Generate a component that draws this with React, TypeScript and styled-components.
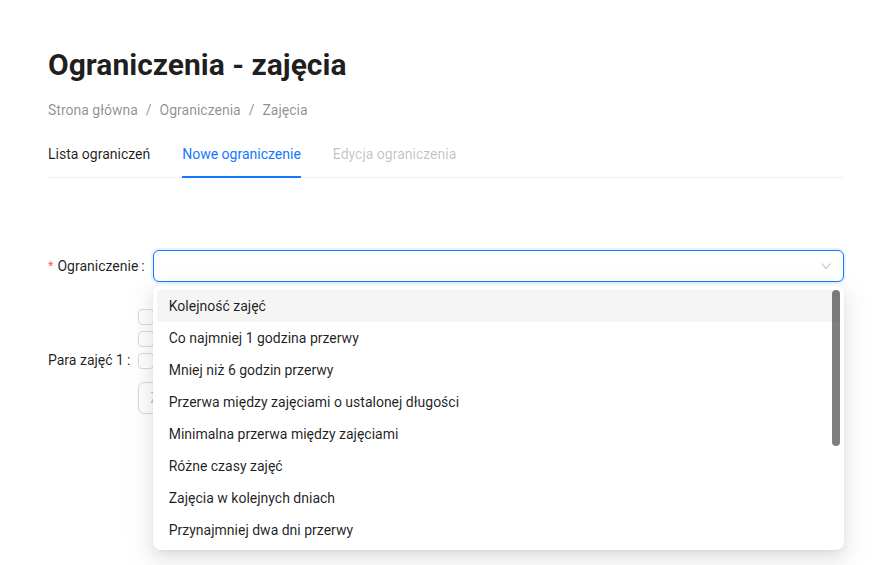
import React from "react";
import styled, { createGlobalStyle } from "styled-components";

const GlobalStyle = createGlobalStyle`
  html, body {
    margin: 0;
    padding: 0;
    background: #ffffff;
  }
  body {
    font-family: Roboto, "Noto Sans", "Liberation Sans", sans-serif;
    font-size: 14px;
    color: rgba(0, 0, 0, 0.88);
  }
  * { box-sizing: border-box; }
`;

const Page = styled.div`
  padding: 46px 48px 0 48px;
  width: 892px;
  height: 565px;
  overflow: hidden;
`;

const Title = styled.h1`
  margin: 0;
  font-size: 30px;
  line-height: 38px;
  font-weight: 700;
  color: rgba(0, 0, 0, 0.88);
`;

const Breadcrumb = styled.nav`
  margin-top: 15px;
  display: flex;
  align-items: center;
  font-size: 14px;
  line-height: 22px;
  color: rgba(0, 0, 0, 0.45);
`;

const Separator = styled.span`
  margin: 0 8px;
`;

const TabNav = styled.div`
  margin-top: 10px;
  display: flex;
  gap: 32px;
  border-bottom: 1px solid rgba(5, 5, 5, 0.06);
`;

const Tab = styled.div<{ $state: "normal" | "active" | "disabled" }>`
  position: relative;
  padding: 12px 0;
  font-size: 14px;
  line-height: 22px;
  color: ${(p) =>
    p.$state === "active"
      ? "#1677ff"
      : p.$state === "disabled"
      ? "rgba(0, 0, 0, 0.25)"
      : "rgba(0, 0, 0, 0.88)"};
  &::after {
    content: "";
    display: ${(p) => (p.$state === "active" ? "block" : "none")};
    position: absolute;
    left: 0;
    right: 0;
    bottom: -1px;
    height: 2px;
    background: #1677ff;
  }
`;

const Form = styled.div`
  margin-top: 72px;
  display: flex;
  flex-direction: column;
  gap: 24px;
`;

const FormRow = styled.div<{ $center?: boolean; $raised?: boolean }>`
  display: flex;
  align-items: ${(p) => (p.$center ? "center" : "flex-start")};
  position: ${(p) => (p.$raised ? "relative" : "static")};
  z-index: ${(p) => (p.$raised ? 5 : "auto")};
`;

const Label = styled.label`
  flex: none;
  display: inline-flex;
  align-items: center;
  height: 32px;
  font-size: 14px;
  color: rgba(0, 0, 0, 0.88);
  white-space: nowrap;
`;

const Star = styled.span`
  color: #ff4d4f;
  font-family: "Liberation Sans", sans-serif;
  font-size: 14px;
  margin-right: 4px;
  line-height: 1;
`;

const Colon = styled.span`
  margin: 0 8px 0 3px;
`;

const Control = styled.div`
  flex: 1;
  position: relative;
`;

const SelectBox = styled.div`
  height: 32px;
  border: 1px solid #1677ff;
  border-radius: 6px;
  box-shadow: 0 0 0 2px rgba(5, 145, 255, 0.1);
  background: #fff;
  display: flex;
  align-items: center;
  justify-content: flex-end;
  padding-right: 11px;
`;

const Dropdown = styled.div`
  position: absolute;
  top: 36px;
  left: 0;
  right: 0;
  z-index: 10;
  background: #fff;
  border-radius: 8px;
  padding: 4px;
  box-shadow: 0 6px 16px 0 rgba(0, 0, 0, 0.08),
    0 3px 6px -4px rgba(0, 0, 0, 0.12), 0 9px 28px 8px rgba(0, 0, 0, 0.05);
`;

const Option = styled.div<{ $active?: boolean }>`
  height: 32px;
  padding: 5px 12px;
  line-height: 22px;
  font-size: 14px;
  border-radius: 4px;
  color: rgba(0, 0, 0, 0.88);
  background: ${(p) => (p.$active ? "rgba(0, 0, 0, 0.04)" : "transparent")};
`;

const ScrollThumb = styled.div`
  position: absolute;
  top: 4px;
  right: 4px;
  width: 8px;
  height: 156px;
  border-radius: 99px;
  background: rgba(0, 0, 0, 0.5);
`;

const CheckList = styled.div`
  display: flex;
  flex-direction: column;
`;

const CheckItem = styled.label`
  display: flex;
  align-items: center;
  height: 22px;
`;

const CheckBox = styled.span`
  width: 16px;
  height: 16px;
  border: 1px solid #d9d9d9;
  border-radius: 4px;
  background: #fff;
  flex: none;
`;

const TextInput = styled.div`
  margin-top: 10px;
  width: 240px;
  height: 32px;
  border: 1px solid #d9d9d9;
  border-radius: 6px;
  padding: 4px 11px;
  line-height: 22px;
  color: rgba(0, 0, 0, 0.25);
`;

const options = [
  "Kolejność zajęć",
  "Co najmniej 1 godzina przerwy",
  "Mniej niż 6 godzin przerwy",
  "Przerwa między zajęciami o ustalonej długości",
  "Minimalna przerwa między zajęciami",
  "Różne czasy zajęć",
  "Zajęcia w kolejnych dniach",
  "Przynajmniej dwa dni przerwy",
];

const Chevron = () => (
  <svg width="12" height="12" viewBox="0 0 12 12" fill="none">
    <polyline
      points="1.5,3.5 6,8.5 10.5,3.5"
      stroke="rgba(0,0,0,0.25)"
      strokeWidth="1.1"
      fill="none"
    />
  </svg>
);

export default function App() {
  return (
    <>
      <GlobalStyle />
      <Page>
        <Title>Ograniczenia - zajęcia</Title>
        <Breadcrumb>
          <span>Strona główna</span>
          <Separator>/</Separator>
          <span>Ograniczenia</span>
          <Separator>/</Separator>
          <span>Zajęcia</span>
        </Breadcrumb>
        <TabNav>
          <Tab $state="normal">Lista ograniczeń</Tab>
          <Tab $state="active">Nowe ograniczenie</Tab>
          <Tab $state="disabled">Edycja ograniczenia</Tab>
        </TabNav>
        <Form>
          <FormRow $raised>
            <Label>
              <Star>*</Star>
              Ograniczenie
              <Colon>:</Colon>
            </Label>
            <Control>
              <SelectBox>
                <Chevron />
              </SelectBox>
              <Dropdown>
                {options.map((o, i) => (
                  <Option key={o} $active={i === 0}>
                    {o}
                  </Option>
                ))}
                <ScrollThumb />
              </Dropdown>
            </Control>
          </FormRow>
          <FormRow $center>
            <Label>
              Para zajęć 1<Colon>:</Colon>
            </Label>
            <Control>
              <CheckList>
                <CheckItem>
                  <CheckBox />
                </CheckItem>
                <CheckItem>
                  <CheckBox />
                </CheckItem>
                <CheckItem>
                  <CheckBox />
                </CheckItem>
              </CheckList>
              <TextInput>Zajęcia</TextInput>
            </Control>
          </FormRow>
        </Form>
      </Page>
    </>
  );
}
